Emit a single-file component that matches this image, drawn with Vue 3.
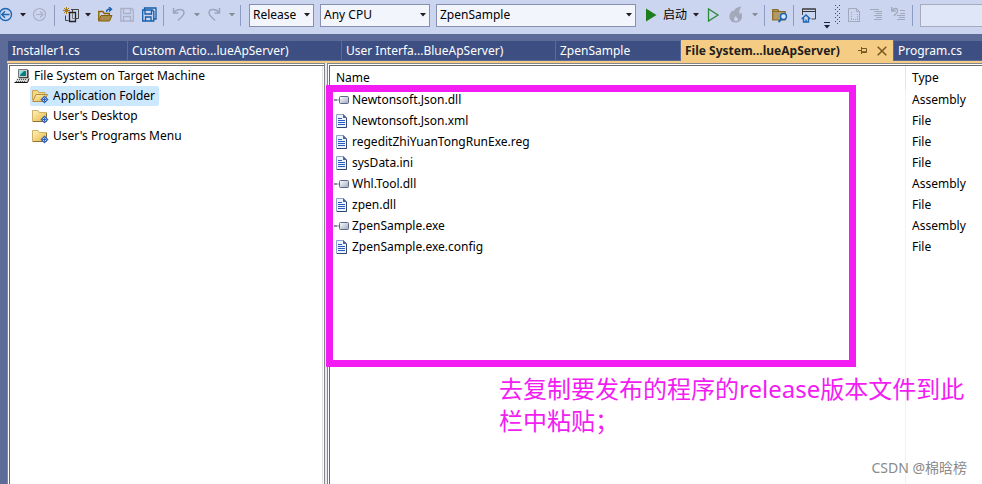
<template>
  <div class="ide">

    <!-- Toolbar -->
    <header class="toolbar">
      <button class="tool back" aria-label="Navigate backward">
        <svg width="16" height="16" viewBox="0 0 16 16" fill="none" stroke="#1a66b3" stroke-width="1.4">
          <circle cx="7.5" cy="7.5" r="6" />
          <path d="M11.5 7.5H4M7 4.3L3.8 7.5L7 10.7" />
        </svg>
      </button>
      <svg class="caret" viewBox="0 0 7 4"><path d="M0 0h6L3 3.5z" /></svg>
      <button class="tool" aria-label="Navigate forward" disabled>
        <svg width="16" height="16" viewBox="0 0 16 16" fill="none" stroke="#a9b0c6" stroke-width="1.2">
          <circle cx="6.5" cy="7.5" r="6" />
          <path d="M3 7.5h7M7 4.5l3 3l-3 3" />
        </svg>
      </button>
      <span class="sep"></span>
      <button class="tool" aria-label="New project">
        <svg width="17" height="16" viewBox="0 0 17 16" fill="none">
          <path d="M4.500 0v7M1 3.500h7M2 1l5 5M7 1L2 6" stroke="#a87716" />
          <path d="M3.500 8.500v5h3M9 2.500h7.500v9h-3M10.500 2.500v3" stroke="#444" />
          <path d="M7.500 5.500h6v9h-6z" stroke="#222" stroke-width="1.3" />
          <path d="M10.500 6v5.500h3" stroke="#777" />
        </svg>
      </button>
      <svg class="caret" viewBox="0 0 7 4"><path d="M0 0h6L3 3.5z" /></svg>
      <button class="tool" aria-label="Open file">
        <svg width="16" height="16" viewBox="0 0 16 16" fill="none">
          <path d="M.8 14V4.500h4l1.500 2h5V8" stroke="#8a6100" stroke-width="1.400" />
          <path d="M3 8.500h11l-2.500 5.500H.5z" fill="#a88b4e" stroke="#8a6100" />
          <path d="M8.500 5c0-2 1-3 4-3M11 0l2.500 2.200L11 4.500" stroke="#1a5fae" stroke-width="1.400" />
        </svg>
      </button>
      <button class="tool" aria-label="Save" disabled>
        <svg width="16" height="16" viewBox="0 0 16 16" fill="none" stroke="#a9b0c6" stroke-width="1.300">
          <path d="M.8 1.500h11l1.500 1.500v11H.8zM3.500 1.500v5h7v-5M3.500 14V9.500h7V14" />
        </svg>
      </button>
      <button class="tool" aria-label="Save all">
        <svg width="16" height="16" viewBox="0 0 16 16" fill="none" stroke="#145da8" stroke-width="1.300">
          <path d="M2.500 3V1h11.500v11h-2" />
          <path d="M.7 3h9.600l1.500 1.500v9.500H.7zM3 3v4h6.500V3M3.500 14V10h5.500v4" />
        </svg>
      </button>
      <span class="sep"></span>
      <button class="tool" aria-label="Undo" disabled>
        <svg width="16" height="16" viewBox="0 0 16 16" fill="none" stroke="#9da5bd" stroke-width="1.500">
          <path d="M2.500 1v5h5M3 5.500C6 1.500 13 1.500 13 6c0 3-3 4-6 7.500" />
        </svg>
      </button>
      <svg class="caret off" viewBox="0 0 7 4"><path d="M1 0h6L4 3.5z" /></svg>
      <button class="tool" aria-label="Redo" disabled>
        <svg width="16" height="16" viewBox="0 0 16 16" fill="none" stroke="#9da5bd" stroke-width="1.500">
          <path d="M13.500 1v5h-5M13 5.500C10 1.500 3 1.500 3 6c0 3 3 4 6 7.500" />
        </svg>
      </button>
      <svg class="caret off" viewBox="0 0 7 4"><path d="M1 0h6L4 3.5z" /></svg>
      <span class="sep wide"></span>

      <div class="combo" v-for="combo in combos" :key="combo.id" :class="combo.id">
        <select v-model="combo.value" :aria-label="combo.label">
          <option v-for="opt in combo.options" :key="opt">{{ opt }}</option>
        </select>
        <svg class="caret" viewBox="0 0 7 4"><path d="M0 0h6L3 3.5z" /></svg>
      </div>

      <button class="tool start">
        <svg width="12" height="14" viewBox="0 0 12 14"><path d="M1 .5v13L11.500 7z" fill="#1c7d1c" /></svg>
        <span>启动</span>
      </button>
      <svg class="caret" viewBox="0 0 7 4"><path d="M0 0h6L3 3.5z" /></svg>
      <button class="tool" aria-label="Start without debugging">
        <svg width="16" height="16" viewBox="0 0 16 16" fill="none" stroke="#2b8b3a" stroke-width="1.300">
          <path d="M2.500 2v12L12 8z" />
        </svg>
      </button>
      <button class="tool" aria-label="Hot reload" disabled>
        <svg width="18" height="18" viewBox="0 0 18 18" fill="#a3a9bb">
          <path d="M13.500 .5c-4 .5-7 2-8 5L4.500 4.500C2 6.500 1 9.500 1.500 12c.7 3 3 4.500 6 4.500c4 0 6.500-2.500 6.500-6c0-1.500-.5-2.500 0-4l-2.500 1.500C11 5.500 11.500 3 13.500 .5z" />
          <path d="M7.500 15c-2-1-2-3 .5-5c0 2 2.500 2 2 4c-.5 1-1.500 1.300-2.500 1z" fill="#ccd5f0" />
        </svg>
      </button>
      <svg class="caret off" viewBox="0 0 7 4"><path d="M0 0h6L3 3.5z" /></svg>
      <span class="sep"></span>
      <button class="tool" aria-label="Find in files">
        <svg width="16" height="16" viewBox="0 0 16 16" fill="none">
          <path d="M.7 13V2.500h5l1.500 2h6V13z" fill="#b09a68" stroke="#8a6a20" stroke-width="1.200" />
          <path d="M7 4.500H1" stroke="#8a6a20" />
          <circle cx="11.500" cy="9.500" r="3" fill="#dbe6fa" stroke="#1a66b3" stroke-width="1.400" />
          <path d="M9.500 12L6.500 15" stroke="#1a66b3" stroke-width="1.800" />
        </svg>
      </button>
      <span class="sep"></span>
      <button class="tool" aria-label="Start page">
        <svg width="16" height="16" viewBox="0 0 16 16" fill="none">
          <path d="M1.500 8V2h13v10h-4" stroke="#444" />
          <path d="M1 2h14M1 4.500h14" stroke="#333" />
          <path d="M.7 12L5 8l4.300 4M2.500 11v4h5v-4M5 15v-2.500" stroke="#1a66b3" stroke-width="1.400" />
        </svg>
      </button>
      <button class="tool overflow" aria-label="Toolbar options">
        <svg width="8" height="8" viewBox="0 0 8 8" fill="#1e2338"><path d="M1 0h6v1H1zM1 3h6L4 6.500z" /></svg>
      </button>
      <svg class="grip" width="6" height="20" viewBox="0 0 6 20" stroke="#3f4a70" stroke-dasharray="1 3">
        <path d="M.5 0v20M4.500 0v20M2.500 2v18" />
      </svg>
      <button class="tool" aria-label="Document outline" disabled>
        <svg width="16" height="16" viewBox="0 0 16 16" fill="none" stroke="#a3a9bd">
          <path d="M1.500 14V1.500h8l3 3V14" />
          <path d="M9.500 1.500v3h3M1 14.500h12" />
          <path d="M4.500 5v7M10.500 7v5M4 12.500h7" stroke-dasharray="1 1" />
        </svg>
      </button>
      <button class="tool" aria-label="Comment lines" disabled>
        <svg width="16" height="16" viewBox="0 0 16 16" fill="none" stroke="#a3a9bd">
          <path d="M1 2.500h9M5 4.500h8M7 6.500h6M5 8.500h8M7 10.500h6M5 12.500h8" />
        </svg>
      </button>
      <button class="tool" aria-label="Uncomment lines" disabled>
        <svg width="16" height="16" viewBox="0 0 16 16" fill="none" stroke="#a3a9bd">
          <path d="M9 3.500h5M9 6.500h5M6 8.500h8M8 10.500h6M6 12.500h8" />
          <path d="M.7 0v4h4M1.200 3.500C3 .5 7 1 6.500 4c0 2-2 3-3.500 5" stroke-width="1.300" />
        </svg>
      </button>
      <span class="sep"></span>
      <input class="search" type="text" aria-label="Search" />
    </header>

    <!-- Document tabs -->
    <nav class="tabs">
      <div
        class="tab"
        v-for="tab in tabs"
        :key="tab.id"
        :class="[tab.id, { active: tab.id === activeTab }]"
      >
        <button class="tab-name" @click="activeTab = tab.id">{{ tab.label }}</button>
        <template v-if="tab.id === activeTab">
          <button class="tab-tool" aria-label="Pin tab">
            <svg width="10" height="9" viewBox="0 0 10 9" fill="none" stroke="#75571f">
              <path d="M0 4.500h3M3.500 1v7M4 2.500h4.500v4H4M4 5.700h4" />
            </svg>
          </button>
          <button class="tab-tool" aria-label="Close tab">
            <svg width="10" height="10" viewBox="0 0 10 10" fill="none" stroke="#75571f" stroke-width="1.500">
              <path d="M.7 .7l8.600 8.600M9.300 .7L.7 9.300" />
            </svg>
          </button>
        </template>
      </div>
    </nav>

    <!-- File system editor -->
    <main class="editor">
      <aside class="tree">
        <div class="node root">
          <svg width="16" height="16" viewBox="0 0 16 16">
            <path d="M4.500 1.500h9v8h-9z" fill="#d0d0d0" stroke="#777" />
            <path d="M14 2v8H5" fill="none" stroke="#111" />
            <path d="M6 3h6v5H6z" fill="#0c7c80" />
            <path d="M6 3h4L6 7z" fill="#7fe0e0" />
            <path d="M3 10.500h11.500l-1.500 4H.5z" fill="#d8d8d8" />
            <path d="M.5 14.500h13l1.500-4" fill="none" stroke="#111" />
            <path d="M3 11.500h10M2 13.500h10" stroke="#555" stroke-dasharray="1 1" />
          </svg>
          <span>File System on Target Machine</span>
        </div>
        <button
          class="node child"
          v-for="folder in folders"
          :key="folder"
          :class="{ selected: folder === selectedFolder }"
          @click="selectedFolder = folder"
        >
          <svg width="17" height="16" viewBox="0 0 17 16">
            <defs>
              <linearGradient id="folderFill" x1="0" y1="0" x2="1" y2="1">
                <stop offset="0" stop-color="#fff3bd" />
                <stop offset="1" stop-color="#e8b53c" />
              </linearGradient>
            </defs>
            <template v-if="folder === selectedFolder">
              <path d="M.5 12V2.500h5l1.500 2h6V7" fill="#f4d983" stroke="#c9a55a" />
              <path d="M.7 13.500L4 6.500h11.500L12 13.500z" fill="url(#folderFill)" stroke="#b08c44" />
            </template>
            <template v-else>
              <path d="M.5 13.500V2.500h5.500l1.500 2h7v9z" fill="url(#folderFill)" stroke="#cdb06a" />
              <path d="M14.500 5v8.500H1" fill="none" stroke="#8d7440" />
            </template>
            <path d="M12.500 7.500l4 4l-4 4l-4-4z" fill="#2f62b8" />
            <path d="M12.500 9.500l2 2l-2 2l-2-2z" fill="none" stroke="#c4d8ff" stroke-dasharray="2 1" />
          </svg>
          <span>{{ folder }}</span>
        </button>
      </aside>

      <section class="list">
        <table>
          <thead>
            <tr>
              <th class="name">Name</th>
              <th class="type">Type</th>
            </tr>
          </thead>
          <tbody>
            <tr v-for="file in files" :key="file.name">
              <td class="name">
                <div class="file">
                  <svg v-if="file.type === 'Assembly'" width="16" height="16" viewBox="0 0 16 16">
                    <defs>
                      <linearGradient id="asmFill" x1="0" y1="0" x2="1" y2="1">
                        <stop offset="0" stop-color="#fff" />
                        <stop offset="1" stop-color="#9fa9bd" />
                      </linearGradient>
                    </defs>
                    <path d="M0 7h3v2H0zM3 7.500h2v1H3z" fill="#8792a6" />
                    <rect x="5.500" y="4.500" width="9" height="7" rx="1" fill="url(#asmFill)" stroke="#5a6988" />
                  </svg>
                  <svg v-else width="16" height="16" viewBox="0 0 16 16">
                    <path d="M2.500 1.500h7l3 3v10h-10z" fill="#eef4ff" stroke="#8fa5cb" />
                    <path d="M12.500 5v9.500H3" fill="none" stroke="#33466e" />
                    <path d="M9 1v4h4z" fill="#4b6594" />
                    <path d="M4 5.500h4M4 7.500h7M4 9.500h7M4 11.500h7" stroke="#2a5cc0" />
                  </svg>
                  <span>{{ file.name }}</span>
                </div>
              </td>
              <td class="type">{{ file.type }}</td>
            </tr>
            <tr class="filler">
              <td class="name"></td>
              <td class="type"></td>
            </tr>
          </tbody>
        </table>

        <!-- Highlighted area and its note -->
        <div class="marker"></div>
        <p class="note">去复制要发布的程序的release版本文件到此栏中粘贴；</p>
      </section>
    </main>

    <div class="watermark">CSDN @棉晗榜</div>
  </div>
</template>

<script setup>
import { ref } from "vue";

const combos = ref([
  { id: "config", label: "Solution configuration", value: "Release", options: ["Debug", "Release"] },
  { id: "platform", label: "Solution platform", value: "Any CPU", options: ["Any CPU", "x86", "x64"] },
  { id: "project", label: "Startup project", value: "ZpenSample", options: ["ZpenSample"] },
]);

const activeTab = ref("filesystem");
const tabs = [
  { id: "installer", label: "Installer1.cs" },
  { id: "actions", label: "Custom Actio...lueApServer)" },
  { id: "interface", label: "User Interfa...BlueApServer)" },
  { id: "sample", label: "ZpenSample" },
  { id: "filesystem", label: "File System...lueApServer)" },
  { id: "program", label: "Program.cs" },
];

const selectedFolder = ref("Application Folder");
const folders = ["Application Folder", "User's Desktop", "User's Programs Menu"];

const files = [
  { name: "Newtonsoft.Json.dll", type: "Assembly" },
  { name: "Newtonsoft.Json.xml", type: "File" },
  { name: "regeditZhiYuanTongRunExe.reg", type: "File" },
  { name: "sysData.ini", type: "File" },
  { name: "Whl.Tool.dll", type: "Assembly" },
  { name: "zpen.dll", type: "File" },
  { name: "ZpenSample.exe", type: "Assembly" },
  { name: "ZpenSample.exe.config", type: "File" },
];
</script>

<style>
body {
  margin: 0;
}
</style>

<style scoped>
.ide {
  position: relative;
  display: flex;
  flex-direction: column;
  min-height: 100vh;
  overflow: hidden;
  background: #5d6b99;
  color: #000;
  font: 12px/20px "Noto Sans", "Noto Sans CJK SC", sans-serif;
}

button,
select,
input {
  font: inherit;
  color: inherit;
  border: none;
  background: none;
  padding: 0;
  margin: 0;
}

svg {
  display: block;
  flex: none;
}

/* Toolbar */
.toolbar {
  display: flex;
  align-items: center;
  gap: 6px;
  height: 34px;
  padding-bottom: 4px;
  box-sizing: border-box;
  background: #ccd5f0;
}

.tool {
  display: flex;
  align-items: center;
  flex: none;
}

.back {
  margin-left: -2px;
}

.caret {
  width: 7px;
  height: 4px;
  fill: #1e1e1e;
}

.caret.off {
  fill: #868b98;
}

.sep {
  flex: none;
  width: 1px;
  height: 21px;
  margin: 0 1px 0 -1px;
  background: #8e9bc4;
}

.sep.wide {
  margin-right: 2px;
}

.combo {
  display: flex;
  align-items: center;
  flex: none;
  position: relative;
}

.combo select {
  width: 100%;
  height: 23px;
  padding: 0 3px;
  appearance: none;
  box-sizing: border-box;
  border: 1px solid #868fae;
  background: #f2f5fc;
}

.combo .caret {
  position: absolute;
  right: 3px;
  pointer-events: none;
}

.config {
  width: 65px;
}

.platform {
  width: 110px;
}

.project {
  width: 200px;
}

.start {
  gap: 6px;
  margin-left: 3px;
}

.overflow {
  align-self: flex-end;
}

.grip {
  margin-left: -2px;
}

.search {
  flex: 1;
  min-width: 0;
  height: 23px;
  box-sizing: border-box;
  border: 1px solid #a5abbd;
  border-right: none;
  background: #dfe6f7;
}

/* Tabs */
.tabs {
  display: flex;
  align-items: flex-end;
  gap: 1px;
  height: 27px;
  padding-left: 8px;
}

.tab {
  display: flex;
  align-items: center;
  flex: none;
  height: 19px;
  margin-bottom: 1px;
  box-sizing: border-box;
  padding-left: 4px;
  background: #3d4f82;
  color: #fff;
  white-space: nowrap;
}

.tab-name {
  flex: 1;
  text-align: left;
}

.tab.active {
  height: 21px;
  margin-bottom: 0;
  gap: 9px;
  padding-right: 6px;
  background: #f5cc84;
  color: #1e1e1e;
  font-weight: bold;
}

.installer {
  width: 119px;
}

.actions,
.interface {
  width: 213px;
}

.sample {
  width: 124px;
}

.filesystem {
  width: 212px;
}

.tab.program {
  flex: 1;
}

/* Editor panes */
.editor {
  flex: 1;
  display: flex;
  gap: 2px;
  margin-left: 7px;
  border-top: 2px solid #f5cc84;
  background: #e8eaf0;
}

.tree {
  flex: 0 0 318px;
  display: flex;
  flex-direction: column;
  align-items: flex-start;
  box-sizing: border-box;
  border: solid #85858d;
  border-width: 1px 1px 0;
  box-shadow: inset 0 1px #fff, inset 1px 0 #fff, inset 0 2px #696969, inset 2px 0 #696969, inset -1px 0 #fff, inset -2px 0 #e3e3e3;
  background: #fff;
  padding: 2px 2px 0;
}

.node {
  display: flex;
  align-items: center;
  gap: 4px;
  height: 20px;
  white-space: nowrap;
}

.root {
  margin-left: 4px;
}

.child {
  margin-left: 20px;
  padding: 0 4px 0 2px;
  border-radius: 2px;
}

.child.selected {
  background: #cce8ff;
}

.list {
  position: relative;
  flex: 1;
  min-width: 0;
  display: flex;
  box-sizing: border-box;
  border: solid #85858d;
  border-width: 1px 0 0 1px;
  box-shadow: inset 0 1px #fff, inset 1px 0 #fff, inset 0 2px #696969, inset 2px 0 #696969;
  background: #fff;
  padding: 2px 0 0 2px;
}

table {
  flex: 1;
  border-collapse: separate;
  border-spacing: 0;
}

th,
td {
  height: 21px;
  padding: 0;
  text-align: left;
  vertical-align: top;
  font-weight: normal;
}

th {
  height: 24px;
  vertical-align: middle;
}

th.name {
  padding-left: 6px;
  border-right: 1px solid #e5e5e5;
}

td.name {
  padding-left: 4px;
  border-right: 1px solid #eaf3fb;
}

.type {
  width: 70px;
  padding-left: 6px;
}

.filler td {
  height: auto;
}

.file {
  display: flex;
  align-items: center;
  gap: 2px;
}

/* Note over the list */
.marker {
  position: absolute;
  top: 21px;
  left: -2px;
  right: 126px;
  height: 282px;
  box-sizing: border-box;
  border: 7px solid #f31cf3;
}

.note {
  position: absolute;
  top: 309px;
  left: 171px;
  right: 8px;
  margin: 0;
  color: #f31cf3;
  font-size: 24px;
  line-height: 32px;
}

.watermark {
  position: absolute;
  right: 15px;
  bottom: 6px;
  color: #8a8a8a;
  font-size: 14px;
}
</style>
